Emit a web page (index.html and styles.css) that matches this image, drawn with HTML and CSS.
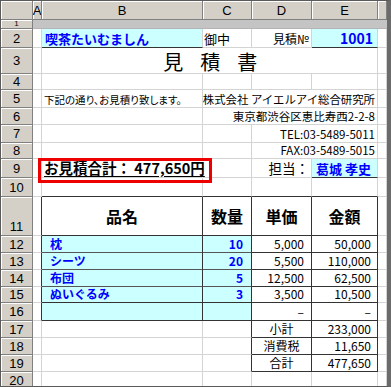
FILE: index.html
```html
<!DOCTYPE html>
<html lang="ja">
<head>
<meta charset="utf-8">
<title>見積書</title>
<link rel="stylesheet" href="styles.css">
</head>
<body>
<div class="sheet">
  <div class="grid">
    <!-- header -->
    <div class="hd"></div><div class="hd">A</div><div class="hd">B</div><div class="hd">C</div><div class="hd">D</div><div class="hd">E</div><div class="hd"></div>
    <!-- 1 -->
    <div class="hd rn1">1</div><div class="band"></div>
    <!-- 2 -->
    <div class="hd">2</div><div class="c"></div><div class="c cy bb shop">喫茶たいむましん</div><div class="c t13 pl1">御中</div><div class="c r t12">見積№</div><div class="c cy bb r blue bold t14 pr4">1001</div><div class="c"></div>
    <!-- 3 -->
    <div class="hd">3</div><div class="c"></div><div class="c title">見　積　書</div><div class="c"></div>
    <!-- 4 -->
    <div class="hd">4</div><div class="c"></div><div class="c"></div><div class="c"></div><div class="c"></div><div class="c"></div><div class="c"></div>
    <!-- 5 -->
    <div class="hd">5</div><div class="c"></div><div class="c t105 palt">下記の通り、お見積り致します。</div><div class="c span3 r t114">株式会社 アイエルアイ総合研究所</div><div class="c"></div>
    <!-- 6 -->
    <div class="hd">6</div><div class="c"></div><div class="c"></div><div class="c span3 r t115">東京都渋谷区恵比寿西2-2-8</div><div class="c"></div>
    <!-- 7 -->
    <div class="hd">7</div><div class="c"></div><div class="c"></div><div class="c"></div><div class="c span2 r t115">TEL:03-5489-5011</div><div class="c"></div>
    <!-- 8 -->
    <div class="hd">8</div><div class="c"></div><div class="c"></div><div class="c"></div><div class="c span2 r t115">FAX:03-5489-5015</div><div class="c"></div>
    <!-- 9 -->
    <div class="hd">9</div><div class="c"></div><div class="c total">お見積合計： 477,650円</div><div class="c"></div><div class="c r t135">担当：</div><div class="c cy bb blue bold t13 pl4">葛城 孝史</div><div class="c"></div>
    <!-- 10 -->
    <div class="hd">10</div><div class="c"></div><div class="c bb"></div><div class="c bb"></div><div class="c bb"></div><div class="c bb"></div><div class="c"></div>
    <!-- 11 -->
    <div class="hd hd-low">11</div><div class="c br"></div><div class="c th">品名</div><div class="c th">数量</div><div class="c th">単価</div><div class="c th">金額</div><div class="c"></div>
    <!-- 12 -->
    <div class="hd">12</div><div class="c br"></div><div class="c cy br bm item">枕</div><div class="c cy br bm r qty">10</div><div class="c br bb r num pd">5,000</div><div class="c br bb r num pe">50,000</div><div class="c"></div>
    <!-- 13 -->
    <div class="hd">13</div><div class="c br"></div><div class="c cy br bm item">シーツ</div><div class="c cy br bm r qty">20</div><div class="c br bb r num pd">5,500</div><div class="c br bb r num pe">110,000</div><div class="c"></div>
    <!-- 14 -->
    <div class="hd">14</div><div class="c br"></div><div class="c cy br bm item">布団</div><div class="c cy br bm r qty">5</div><div class="c br bb r num pd">12,500</div><div class="c br bb r num pe">62,500</div><div class="c"></div>
    <!-- 15 -->
    <div class="hd">15</div><div class="c br"></div><div class="c cy br bb item">ぬいぐるみ</div><div class="c cy br bb r qty">3</div><div class="c br bb r num pd">3,500</div><div class="c br bb r num pe">10,500</div><div class="c"></div>
    <!-- 16 -->
    <div class="hd">16</div><div class="c br"></div><div class="c cy br bb"></div><div class="c cy br bb"></div><div class="c br bb r num pd dash">–</div><div class="c br bb r num pe dash">–</div><div class="c"></div>
    <!-- 17 -->
    <div class="hd">17</div><div class="c"></div><div class="c"></div><div class="c br"></div><div class="c br bb ctr t12">小計</div><div class="c br bb r num pe">233,000</div><div class="c"></div>
    <!-- 18 -->
    <div class="hd">18</div><div class="c"></div><div class="c"></div><div class="c br"></div><div class="c br bb ctr t12">消費税</div><div class="c br bb r num pe">11,650</div><div class="c"></div>
    <!-- 19 -->
    <div class="hd">19</div><div class="c"></div><div class="c"></div><div class="c br"></div><div class="c br bb ctr t12">合計</div><div class="c br bb r num pe">477,650</div><div class="c"></div>
    <!-- 20 -->
    <div class="hd">20</div><div class="c"></div><div class="c"></div><div class="c"></div><div class="c"></div><div class="c"></div><div class="c"></div>
  </div>
  <div class="redbox"></div>
</div>
</body>
</html>
```

FILE: styles.css
```css
* {
  box-sizing: border-box;
}

html, body {
  margin: 0;
  padding: 0;
  background: #ffffff;
}

.sheet {
  position: relative;
  width: 391px;
  height: 387px;
  overflow: hidden;
  border-top: 1px solid #5a5a5a;
  border-left: 1px solid #5a5a5a;
  border-bottom: 1px solid #5a5a5a;
  border-right: 4px solid #6b6b6b;
  font-family: "Noto Sans CJK JP", sans-serif;
  color: #000;
  background: #fff;
}

.grid {
  display: grid;
  grid-template-columns: 32px 9px 161px 49px 60px 66px 9px;
  grid-template-rows: 19px 9px 19px 26px 16px 18px 17px 18px 16px 19px 19px 39px 17px 17px 17px 16px 18px 17px 17px 17px 17px;
}

/* headers */
.hd {
  background: #d4d0c8;
  border-right: 1px solid #808080;
  border-bottom: 1px solid #808080;
  box-shadow: inset 1px 1px 0 #ffffff;
  display: flex;
  align-items: center;
  justify-content: center;
  font-family: "Liberation Sans", Arial, sans-serif;
  font-size: 13px;
  color: #000;
  overflow: hidden;
}

.hd.rn1 {
  font-size: 8px;
  line-height: 1;
}

.hd.hd-low {
  align-items: flex-end;
  padding-bottom: 1px;
}

.band {
  grid-column: span 6;
  background: #c4c4c4;
  border-bottom: 1px solid #b4b4b4;
}

/* cells */
.c {
  border-right: 1px solid #d4d4d4;
  border-bottom: 1px solid #d4d4d4;
  display: flex;
  align-items: flex-end;
  white-space: nowrap;
  font-size: 12px;
  line-height: 1;
  padding: 0 2px 2px 2px;
  min-width: 0;
}

.r { justify-content: flex-end; }
.ctr { justify-content: center; }

.cy { background: #ccffff; }
.bb { border-bottom-color: #333333; }
.bm { border-bottom-color: #555555; }
.br { border-right-color: #333333; }

.blue { color: #0000ff; }
.bold { font-weight: 700; }

.t105 { font-size: 10.5px; }
.t114 { font-size: 11.4px; }
.t115 { font-size: 11.5px; }
.t12 { font-size: 12px; }
.t13 { font-size: 13px; }
.t135 { font-size: 13.5px; }
.t14 { font-size: 14px; }
.pl1 { padding-left: 1px; }
.pl4 { padding-left: 4px; }
.pr4 { padding-right: 4px; }
.palt { font-feature-settings: "palt"; }

.span2 { grid-column: span 2; padding-right: 2px; }
.span3 { grid-column: span 3; padding-right: 2px; }

.shop {
  color: #0000ff;
  font-weight: 700;
  font-size: 13px;
  padding-left: 3px;
}

.title {
  grid-column: span 4;
  justify-content: center;
  align-items: flex-end;
  font-size: 20px;
  letter-spacing: -1.5px;
  padding: 0 0 1px 0;
}

.total {
  font-weight: 700;
  font-size: 14.5px;
  text-decoration: underline;
  text-underline-offset: 2px;
  overflow: visible;
  border-right-color: transparent;
  padding-left: 2px;
  position: relative;
  z-index: 1;
}

.th {
  border-right-color: #333333;
  border-bottom-color: #333333;
  justify-content: center;
  align-items: center;
  font-size: 16px;
  font-weight: 700;
  padding: 0;
}

.item {
  color: #0000ff;
  font-weight: 700;
  font-size: 12px;
  padding-left: 8px;
  padding-bottom: 2px;
}

.qty {
  color: #0000ff;
  font-weight: 700;
  font-size: 12px;
  padding-right: 8px;
}

.num { font-size: 12px; }
.pd { padding-right: 7px; }
.pe { padding-right: 6px; }
.dash { align-items: center; padding-bottom: 0; }

.redbox {
  position: absolute;
  left: 37px;
  top: 157px;
  width: 174px;
  height: 25px;
  border: 3px solid #ee0000;
  pointer-events: none;
}
```
